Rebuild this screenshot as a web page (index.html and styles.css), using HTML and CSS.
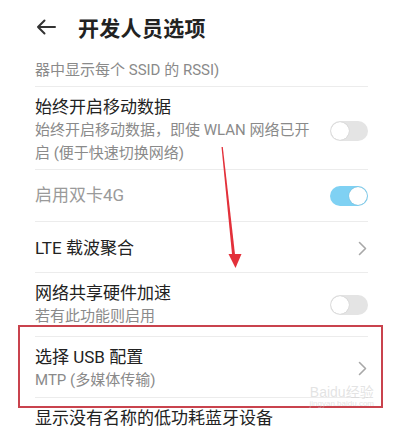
FILE: index.html
```html
<!DOCTYPE html>
<html lang="zh-CN">
<head>
  <meta charset="UTF-8" />
  <meta name="viewport" content="width=device-width, initial-scale=1.0"/>
  <title>开发人员选项</title>
  <link rel="stylesheet" href="styles.css">
</head>
<body>

  <header class="topbar">
    <svg class="back" width="20" height="16" viewBox="0 0 20 16">
      <path d="M19 8H2M8.5 1.5L2 8l6.5 6.5" fill="none" stroke="#333" stroke-width="2" stroke-linecap="round" stroke-linejoin="round"/>
    </svg>
    <h1>开发人员选项</h1>
  </header>

  <div class="list">
    <div class="row row-cut">
      <div class="sub">器中显示每个 SSID 的 RSSI)</div>
    </div>

    <div class="row row-tall">
      <div class="text">
        <div class="title">始终开启移动数据</div>
        <div class="sub wrap">始终开启移动数据，即使 WLAN 网络已开启 (便于快速切换网络)</div>
      </div>
      <span class="switch"></span>
    </div>

    <div class="row row-single">
      <div class="title muted">启用双卡4G</div>
      <span class="switch on"></span>
    </div>

    <div class="row row-single row-lte">
      <div class="title">LTE 载波聚合</div>
      <svg class="chev" width="9" height="15" viewBox="0 0 9 15"><path d="M1.5 1.5l6 6-6 6" fill="none" stroke="#a8a8a8" stroke-width="1.6" stroke-linecap="round" stroke-linejoin="round"/></svg>
    </div>

    <div class="row row-two">
      <div class="text">
        <div class="title">网络共享硬件加速</div>
        <div class="sub">若有此功能则启用</div>
      </div>
      <span class="switch"></span>
    </div>

    <div class="row row-two row-usb">
      <div class="text">
        <div class="title">选择 USB 配置</div>
        <div class="sub">MTP (多媒体传输)</div>
      </div>
      <svg class="chev" width="9" height="15" viewBox="0 0 9 15"><path d="M1.5 1.5l6 6-6 6" fill="none" stroke="#a8a8a8" stroke-width="1.6" stroke-linecap="round" stroke-linejoin="round"/></svg>
      <div class="mark-box"></div>
      <div class="watermark">Baidu经验<small>jingyan.baidu.com</small></div>
    </div>

    <div class="row row-last">
      <div class="title">显示没有名称的低功耗蓝牙设备</div>
    </div>
  </div>

  <!-- red annotation arrow -->
  <svg class="mark-arrow" width="400" height="428" viewBox="0 0 400 428">
    <path d="M221.5 147L222.8 147L235.2 256L232.2 256Z" fill="#e3303a"/>
    <path d="M228.5 254L241.5 254L235.5 268Z" fill="#e3303a"/>
  </svg>

</body>
</html>
```

FILE: styles.css
```css
body {
  margin: 0;
  font-family: Roboto, "Noto Sans CJK SC", sans-serif;
  background: #fff;
  color: #222;
  position: relative;
  height: 428px;
  overflow: hidden;
}
.topbar {
  display: flex;
  align-items: center;
  height: 54px;
  padding-left: 36px;
}
.topbar h1 {
  margin: 0 0 0 22px;
  font-size: 21px;
  font-weight: bold;
  color: #222;
  letter-spacing: 0.3px;
}
.back {
  display: block;
}
.list {
  padding: 0 32px 0 35px;
}
.row {
  display: flex;
  align-items: center;
  justify-content: space-between;
  border-bottom: 1px solid #ececec;
  box-sizing: border-box;
  position: relative;
}
.row-cut {
  height: 33px;
}
.row-tall {
  height: 83px;
  padding-top: 5px;
}
.row-single {
  height: 52px;
}
.row-lte {
  height: 51px;
  padding-top: 2px;
}
.row-two {
  height: 64px;
}
.row-usb {
  height: 61px;
  padding-top: 3px;
}
.row-last {
  border-bottom: none;
  height: 30px;
  align-items: flex-start;
  padding-top: 12px;
}
.row-last .title {
  line-height: 17px;
}
.title {
  font-size: 17px;
  line-height: 23px;
  color: #222;
}
.title.muted {
  color: #9a9a9a;
}
.sub {
  font-size: 15px;
  line-height: 23px;
  color: #8a8a8a;
}
.sub.wrap {
  width: 284px;
}
.switch {
  width: 38px;
  height: 20px;
  border-radius: 10px;
  background: #e4e4e4;
  position: relative;
  flex-shrink: 0;
}
.switch::after {
  content: "";
  position: absolute;
  top: 1px;
  left: 1px;
  width: 18px;
  height: 18px;
  border-radius: 50%;
  background: #fff;
  box-shadow: 0 0 1px rgba(0,0,0,0.25);
}
.switch.on {
  background: #7fd1f3;
}
.switch.on::after {
  left: 19px;
}
.chev {
  display: block;
  margin-right: 1px;
}
.mark-box {
  position: absolute;
  left: -17px;
  right: -15px;
  top: -12px;
  bottom: -11px;
  border: 2.5px solid #c9434d;
  pointer-events: none;
}
.watermark {
  position: absolute;
  right: -6px;
  bottom: -12px;
  font-family: "Liberation Sans", "Noto Sans CJK SC", sans-serif;
  font-size: 14px;
  line-height: 14px;
  color: rgba(200,200,200,0.5);
  text-align: center;
}
.watermark small {
  display: block;
  font-size: 8px;
  line-height: 10px;
}
.mark-arrow {
  position: absolute;
  left: 0;
  top: 0;
  pointer-events: none;
}
```
